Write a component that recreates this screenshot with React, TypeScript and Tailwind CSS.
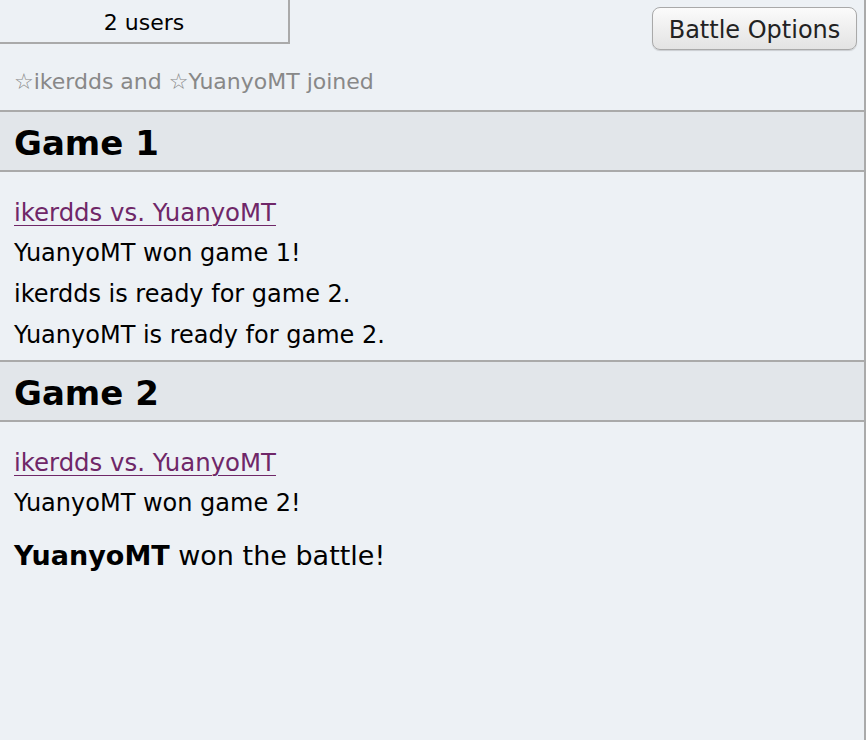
import React from "react";

const font = { fontFamily: '"DejaVu Sans", Verdana, sans-serif' };

function GameHeader({ title }: { title: string }) {
  return (
    <div className="h-[62px] border-y-2 border-[#aaaaaa] bg-[#e2e6ea] flex items-center px-[14px] pt-[3px]">
      <h2 className="text-[34px] font-bold text-black leading-none">{title}</h2>
    </div>
  );
}

function Line({ children }: { children: React.ReactNode }) {
  return <div className="h-[41px] leading-[41px] text-[24px] text-black px-[14px]">{children}</div>;
}

function LinkLine({ children }: { children: React.ReactNode }) {
  return (
    <div className="h-[41px] leading-[41px] text-[24.4px] px-[14px]">
      <a href="#" className="text-[#6f2768] underline decoration-1 underline-offset-[4px]">
        {children}
      </a>
    </div>
  );
}

export default function App() {
  return (
    <div
      className="w-[866px] h-[740px] bg-[#edf1f5] border-r-2 border-[#aaaaaa] overflow-hidden"
      style={font}
    >
      <div className="flex items-start justify-between h-[50px]">
        <div className="w-[290px] h-[44px] border-r-2 border-b-2 border-[#aaaaaa] flex items-center justify-center pt-[3px] text-[22px] text-black">
          2 users
        </div>
        <button className="mt-[7px] mr-[7px] h-[43px] w-[205px] rounded-[8px] border border-[#a9a9a9] bg-gradient-to-b from-[#fbfbfb] to-[#e3e3e3] pt-[2px] text-[24px] text-[#222222] shadow-[0_1px_1px_rgba(0,0,0,0.15)]">
          Battle Options
        </button>
      </div>
      <div className="mt-[12px] h-[39px] leading-[40px] px-[14px] text-[22px] text-[#888888]">
        ☆ikerdds and ☆YuanyoMT joined
      </div>
      <div className="mt-[9px]">
        <GameHeader title="Game 1" />
        <div className="pt-[20px] pb-[4px]">
          <LinkLine>ikerdds vs. YuanyoMT</LinkLine>
          <Line>YuanyoMT won game 1!</Line>
          <Line>ikerdds is ready for game 2.</Line>
          <Line>YuanyoMT is ready for game 2.</Line>
        </div>
        <GameHeader title="Game 2" />
        <div className="pt-[20px]">
          <LinkLine>ikerdds vs. YuanyoMT</LinkLine>
          <Line>YuanyoMT won game 2!</Line>
          <div className="mt-[11px] h-[41px] leading-[41px] text-[27px] text-black px-[14px]">
            <strong className="font-bold">YuanyoMT</strong> won the battle!
          </div>
        </div>
      </div>
    </div>
  );
}
